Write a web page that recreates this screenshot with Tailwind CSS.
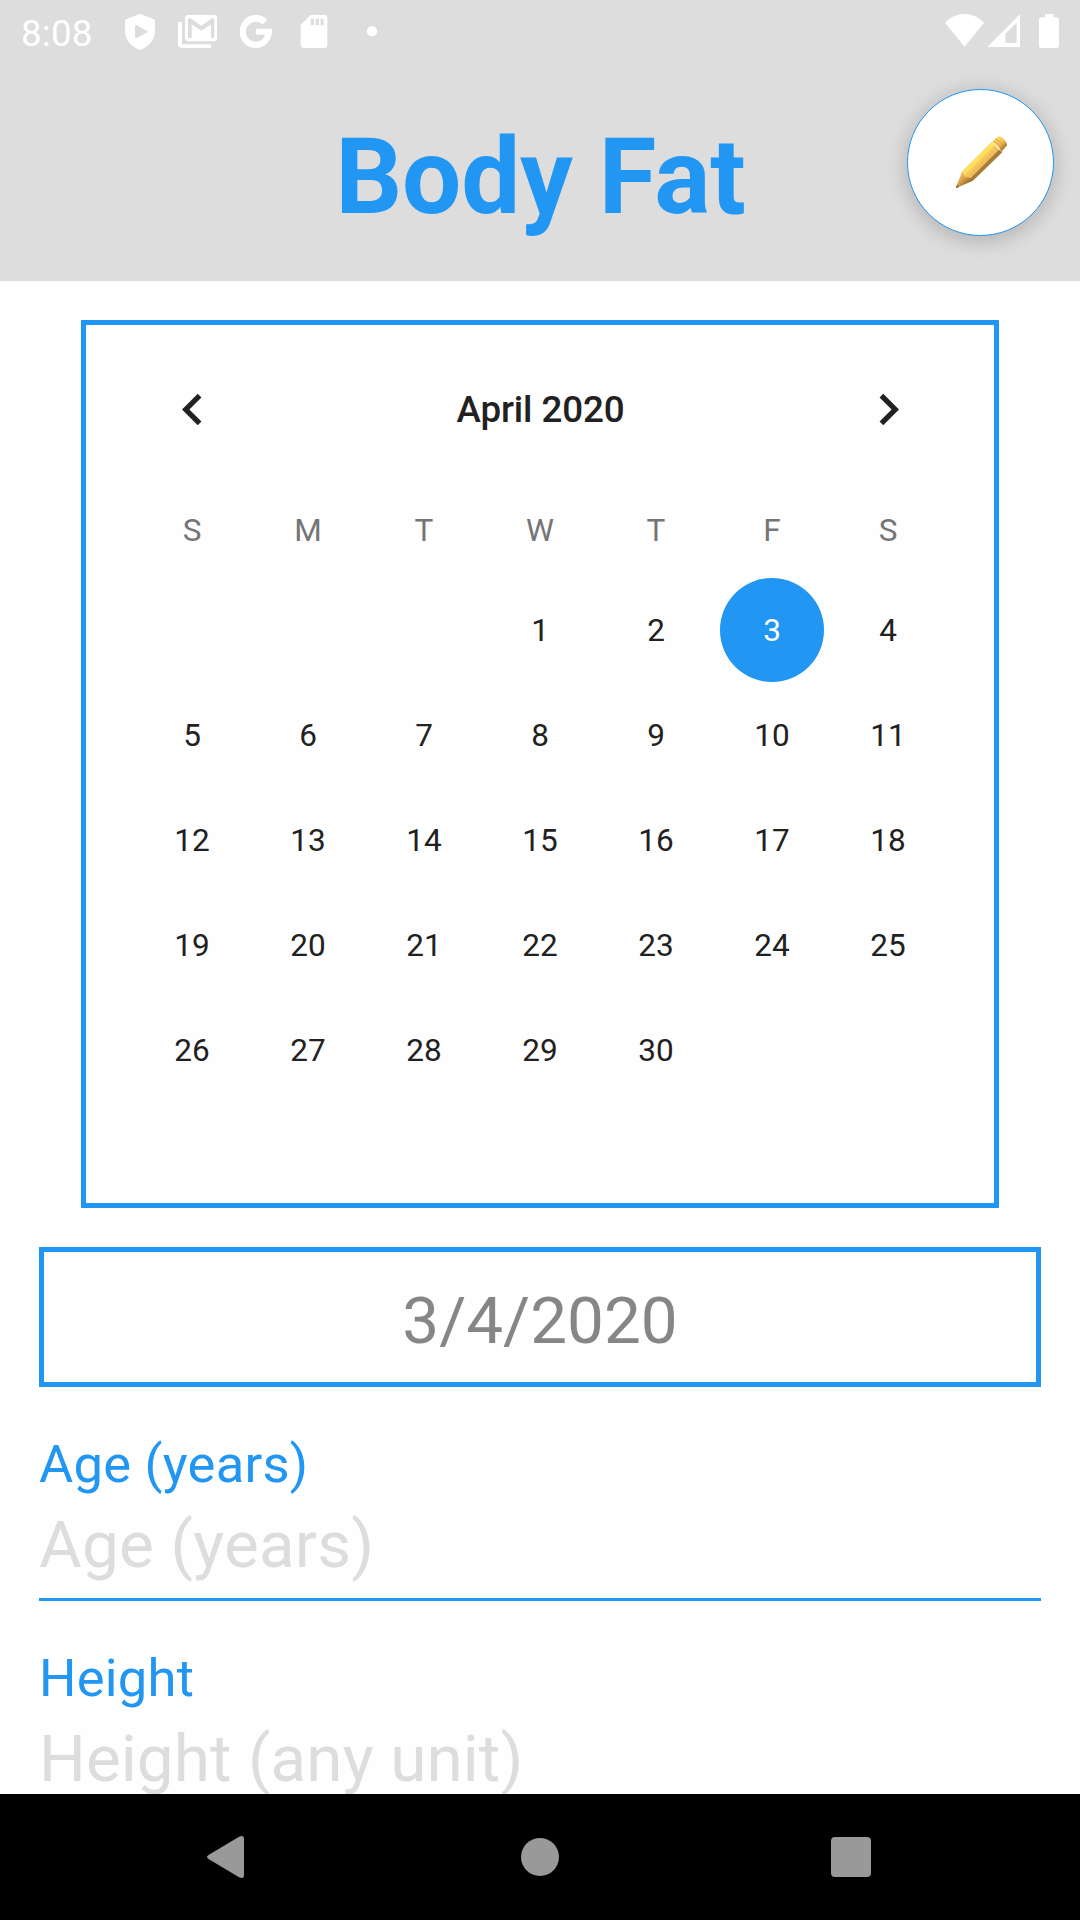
<!DOCTYPE html>
<html lang="en">
<head>
<meta charset="utf-8">
<title>Body Fat</title>
<script src="https://cdn.jsdelivr.net/npm/@tailwindcss/browser@4"></script>
</head>
<body class="bg-white">
<div class="relative flex h-[1920px] w-[1080px] flex-col overflow-hidden bg-[#fefefe] font-['Roboto',sans-serif] font-normal">

  <header class="flex h-[281px] shrink-0 flex-col bg-[#dddddd]">
    <!-- Status bar -->
    <div class="flex h-[63px] items-start justify-between text-white">
      <div class="flex items-start pl-[21px]">
        <span class="mt-1 w-[71px] text-[36.75px] leading-[60px] tracking-[0.2px] whitespace-nowrap">8:08</span>
        <svg class="ml-[28px] h-[63px] w-[300px]" viewBox="360 0 900 189" fill="currentColor">
          <path fill-rule="evenodd" d="M420 41L465 59V92C465 120 445 141 420 150C395 141 375 120 375 92V59ZM405 79V111Q405 116 410 114L445 95L410 76Q405 74 405 79Z"/>
          <path d="M534 66H546V133H633V144H545Q534 143 534 132Z"/>
          <path fill-rule="evenodd" d="M565 45H641Q651 45 651 55V114Q651 124 641 124H565Q555 124 555 114V55Q555 45 565 45ZM564 57V114H575V73L604 92L633 73V114H643V57L637 54L604 77L570 54Z"/>
          <path d="M768 86H816Q818 113 802 129Q789 144 768 144C740 144 719 123 719 95C719 67 740 45 768 45Q788 45 802 59L788 73Q780 65 768 65C751 65 738 78 738 95C738 112 751 125 768 125Q789 124 795 104H768Z"/>
          <path fill-rule="evenodd" d="M932 45H973Q982 45 982 54V135Q982 144 973 144H911Q902 144 902 135V75ZM932 56V76H942V56ZM947 56V76H957V56ZM962 56V76H971V56Z"/>
          <circle cx="1116" cy="93.500" r="15.500"/>
        </svg>
      </div>
      <svg class="h-[63px] w-[140px]" viewBox="120 0 420 189" fill="currentColor">
        <path d="M135 68Q161 42 193.500 42Q226 42 252 68L193.500 140Z"/>
        <path fill-rule="evenodd" d="M360 43V141H262ZM350 68L316 101V129H350Z"/>
        <path d="M435 42H460V52H470Q477 52 477 59V137Q477 144 470 144H424Q417 144 417 137V59Q417 52 424 52H435Z"/>
      </svg>
    </div>
    <h1 class="mt-[55px] pl-px text-center text-[105px] leading-[120px] font-bold tracking-[-0.2px] text-[#2196f3]">Body Fat</h1>
  </header>

  <!-- Floating edit button -->
  <button class="absolute top-[89px] left-[907px] size-[147px] rounded-full border border-[#2196f3] bg-white shadow-[0_6px_20px_rgba(0,0,0,0.14),0_0_24px_rgba(0,0,0,0.08)]" aria-label="Edit">
    <svg class="size-[145px]" viewBox="84 60 435 435">
      <defs>
        <linearGradient id="tip" gradientUnits="userSpaceOnUse" x1="238" y1="318" x2="264" y2="344">
          <stop offset="0" stop-color="#eebc58"/><stop offset=".4" stop-color="#d99f48"/><stop offset="1" stop-color="#8d682d"/>
        </linearGradient>
        <linearGradient id="cap" gradientUnits="userSpaceOnUse" x1="346" y1="208" x2="374" y2="236">
          <stop offset="0" stop-color="#ffdf5c"/><stop offset=".55" stop-color="#f0b954"/><stop offset="1" stop-color="#94702f"/>
        </linearGradient>
      </defs>
      <path fill="#f3bb59" d="M247 304L335 217L365 247L277 333L255 326Z"/>
      <path fill="#ffe05c" d="M247 304L335 217L345 225L257 312L254 320Z"/>
      <path fill="#f7cb5a" d="M257 312L345 225L350 230L262 317L256 322Z"/>
      <path fill="#a67c39" d="M273 323L357 239L367 247L278 333L258 330Z"/>
      <path fill="url(#tip)" d="M247 304L255 321L272 324L277 333L231 353L228 351Z"/>
      <path fill="#806020" d="M231 345L228 352L230 354L237 350Z"/>
      <path fill="url(#cap)" d="M335 217L355 199Q361 198 370 206Q381 215 381 226L364 245Q360 235 351 227Q343 219 335 217Z"/>
      <path fill="none" stroke="#c69034" stroke-width="2" d="M339 213Q350 217 358 226Q366 234 368 242M345 207Q356 212 364 220Q372 228 373 236"/>
    </svg>
  </button>

  <main class="flex h-[1513px] shrink-0 flex-col overflow-hidden px-[39px] pt-[39px]">
    <!-- Calendar -->
    <section class="mx-[42px] flex h-[888px] shrink-0 flex-col border-5 border-[#2196f3] px-12 text-[#212121]">
      <div class="mt-[53px] flex h-[63px] items-center justify-between pr-[26px] pl-[27px]">
        <svg class="size-[63px]" viewBox="0 0 24 24" fill="currentColor"><path d="M15.410 7.410 14 6l-6 6 6 6 1.410-1.410L10.830 12z"/></svg>
        <span class="text-[36.75px] leading-[63px] font-medium tracking-[-0.1px]">April 2020</span>
        <svg class="size-[63px]" viewBox="0 0 24 24" fill="currentColor"><path d="M10 6 8.590 7.410 13.170 12l-4.580 4.590L10 18l6-6z"/></svg>
      </div>
      <div class="mt-[69px] grid grid-cols-7 text-center text-[31.5px] leading-[42px] text-[#757575]">
        <span>S</span><span>M</span><span>T</span><span>W</span><span>T</span><span>F</span><span>S</span>
      </div>
      <div class="mt-[25px] grid auto-rows-[105px] grid-cols-7 text-center text-[31.5px] leading-[107px]">
        <span class="col-start-4">1</span><span>2</span><span class="mt-px size-[104px] justify-self-center rounded-full bg-[#2196f3] leading-[105px] text-white">3</span><span>4</span>
        <span>5</span><span>6</span><span>7</span><span>8</span><span>9</span><span>10</span><span>11</span>
        <span>12</span><span>13</span><span>14</span><span>15</span><span>16</span><span>17</span><span>18</span>
        <span>19</span><span>20</span><span>21</span><span>22</span><span>23</span><span>24</span><span>25</span>
        <span>26</span><span>27</span><span>28</span><span>29</span><span>30</span>
      </div>
    </section>

    <!-- Selected date -->
    <div class="mt-[39px] h-[140px] shrink-0 border-5 border-[#2196f3] pt-1 text-center text-[65.625px] leading-[130px] text-[#868686]">3/4/2020</div>

    <!-- Form fields -->
    <div class="mt-[46px] flex h-[168px] shrink-0 flex-col border-b-3 border-[#2196f3]">
      <span class="text-[52.5px] leading-[62px] tracking-[0.25px] text-[#2196f3]">Age (years)</span>
      <span class="mt-3 text-[65.625px] leading-[76px] tracking-[0.2px] text-[#dddddd]">Age (years)</span>
    </div>
    <div class="mt-[46px] flex h-[168px] shrink-0 flex-col border-b-3 border-[#2196f3]">
      <span class="text-[52.5px] leading-[62px] tracking-[0.25px] text-[#2196f3]">Height</span>
      <span class="mt-3 text-[65.625px] leading-[76px] tracking-[0.1px] text-[#dddddd]">Height (any unit)</span>
    </div>
  </main>

  <!-- System navigation -->
  <nav class="flex h-[126px] shrink-0 items-center justify-between bg-black px-[207px] text-[#999999]">
    <svg class="h-[42px] w-[37px]" viewBox="0 0 37 42" fill="currentColor"><path d="M1.500 19L32.500.5Q37-1 37 3V39Q37 43 32.500 41.500L1.500 23Q-1.500 21 1.500 19Z"/></svg>
    <span class="ml-[5px] size-[38px] rounded-full bg-[#999999]"></span>
    <span class="mr-0.5 size-10 rounded-[4px] bg-[#999999]"></span>
  </nav>
</div>
</body>
</html>
